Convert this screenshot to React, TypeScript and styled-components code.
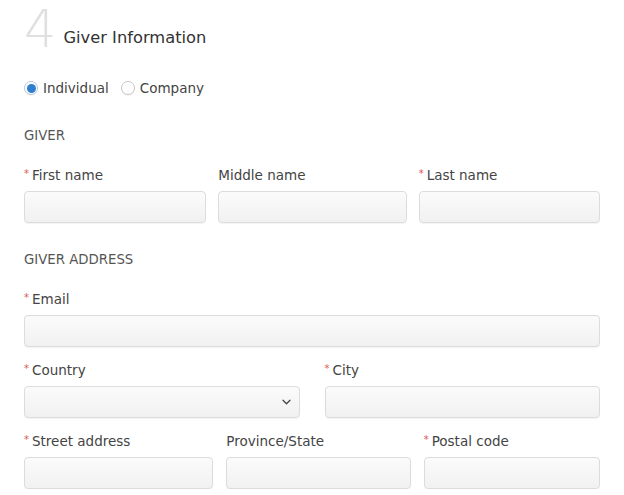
import React from "react";
import styled, { createGlobalStyle } from "styled-components";

const Global = createGlobalStyle`
  html, body { margin: 0; padding: 0; background: #fff; }
  body { font-family: "DejaVu Sans", "Open Sans", sans-serif; color: #444; }
  * { box-sizing: border-box; }
`;

const Page = styled.div`
  width: 624px;
  padding: 0 24px;
`;

const Heading = styled.div`
  display: flex;
  align-items: flex-end;
`;

const StepNumber = styled.span`
  font-family: "DejaVu Sans", sans-serif;
  font-weight: 200;
  font-size: 51px;
  line-height: 60px;
  color: #e0e0e0;
  margin-right: 7px;
`;

const Title = styled.h2`
  margin: 0 0 12px 0;
  font-size: 16.3px;
  line-height: 20px;
  font-weight: normal;
  color: #333;
`;

const RadioRow = styled.div`
  display: flex;
  align-items: center;
  gap: 12px;
  margin-top: 20px;
  height: 16px;
`;

const RadioLabel = styled.label`
  display: flex;
  align-items: center;
  gap: 5px;
  font-size: 13.5px;
  color: #444;
`;

const RadioCircle = styled.span<{ checked?: boolean }>`
  width: 14px;
  height: 14px;
  border-radius: 50%;
  border: 1px solid ${(p) => (p.checked ? "#b8c9dc" : "#c8c8c8")};
  background: #fff;
  display: flex;
  align-items: center;
  justify-content: center;
  box-shadow: 0 1px 1px rgba(0, 0, 0, 0.05);
  &::after {
    content: "";
    display: ${(p) => (p.checked ? "block" : "none")};
    width: 9px;
    height: 9px;
    border-radius: 50%;
    background: #2f7fcc;
  }
`;

const SectionTitle = styled.div<{ top: number }>`
  font-size: 13.3px;
  line-height: 16px;
  color: #555;
  margin-top: ${(p) => p.top}px;
`;

const Row = styled.div<{ cols: string; gap: number; top: number }>`
  display: grid;
  grid-template-columns: ${(p) => p.cols};
  column-gap: ${(p) => p.gap}px;
  margin-top: ${(p) => p.top}px;
`;

const Field = styled.div`
  display: flex;
  flex-direction: column;
  min-width: 0;
`;

const Label = styled.label`
  display: flex;
  align-items: center;
  height: 16px;
  font-size: 13.5px;
  line-height: 16px;
  color: #444;
  margin-bottom: 8px;
  white-space: nowrap;
`;

const Req = styled.span`
  color: #e05555;
  font-size: 10px;
  line-height: 10px;
  align-self: flex-start;
  margin: 2px 3px 0 0;
`;

const Input = styled.input`
  height: 32px;
  width: 100%;
  border: 1px solid #dcdcdc;
  border-radius: 4px;
  background: linear-gradient(#fbfbfb, #f1f1f1);
  box-shadow: 0 1px 1px rgba(0, 0, 0, 0.05);
  outline: none;
  padding: 0 10px;
  font: inherit;
`;

const SelectBox = styled.div`
  height: 32px;
  width: 100%;
  border: 1px solid #dcdcdc;
  border-radius: 4px;
  background: linear-gradient(#fbfbfb, #f1f1f1);
  box-shadow: 0 1px 1px rgba(0, 0, 0, 0.05);
  display: flex;
  align-items: center;
  justify-content: flex-end;
  padding-right: 8px;
`;

const Chevron = () => (
  <svg width="9" height="6" viewBox="0 0 9 6" fill="none">
    <path d="M1 1.2l3.5 3.5 3.5-3.5" stroke="#444" strokeWidth="1.3" strokeLinecap="round" strokeLinejoin="round" />
  </svg>
);

const TextField = ({ label, required }: { label: string; required?: boolean }) => (
  <Field>
    <Label>
      {required && <Req>*</Req>}
      {label}
    </Label>
    <Input type="text" />
  </Field>
);

export default function App() {
  return (
    <>
      <Global />
      <Page>
        <Heading>
          <StepNumber>4</StepNumber>
          <Title>Giver Information</Title>
        </Heading>
        <RadioRow>
          <RadioLabel>
            <RadioCircle checked />
            Individual
          </RadioLabel>
          <RadioLabel>
            <RadioCircle />
            Company
          </RadioLabel>
        </RadioRow>
        <SectionTitle top={32}>GIVER</SectionTitle>
        <Row cols="182fr 188fr 181fr" gap={12} top={23}>
          <TextField label="First name" required />
          <TextField label="Middle name" />
          <TextField label="Last name" required />
        </Row>
        <SectionTitle top={29}>GIVER ADDRESS</SectionTitle>
        <Row cols="1fr" gap={0} top={23}>
          <TextField label="Email" required />
        </Row>
        <Row cols="1fr 1fr" gap={25} top={15}>
          <Field>
            <Label>
              <Req>*</Req>Country
            </Label>
            <SelectBox>
              <Chevron />
            </SelectBox>
          </Field>
          <TextField label="City" required />
        </Row>
        <Row cols="189fr 184fr 176fr" gap={13} top={15}>
          <TextField label="Street address" required />
          <TextField label="Province/State" />
          <TextField label="Postal code" required />
        </Row>
      </Page>
    </>
  );
}
